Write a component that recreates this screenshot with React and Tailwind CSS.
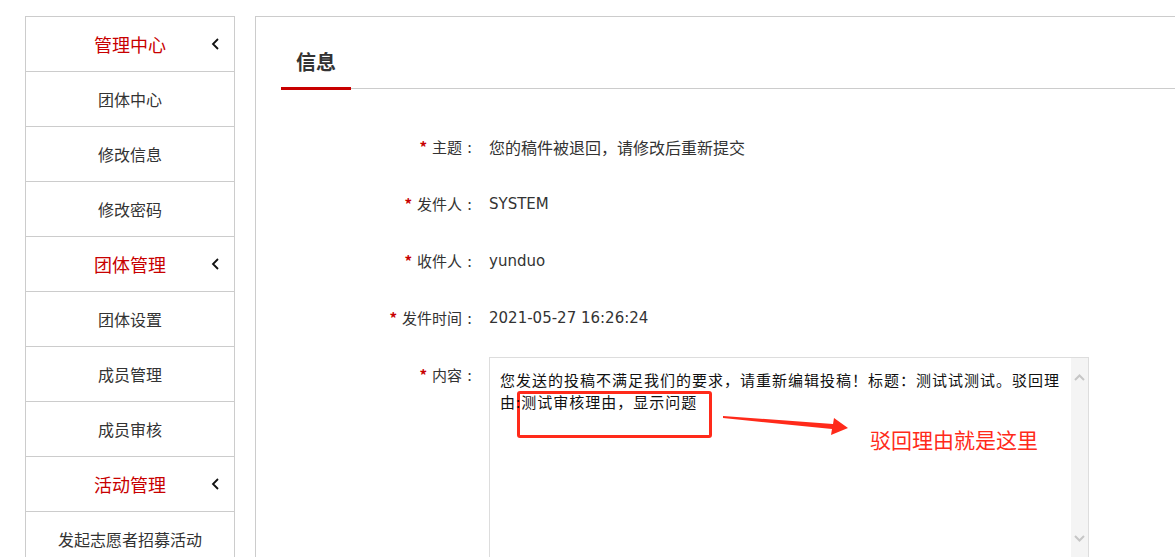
import React from "react";

const font = { fontFamily: '"Noto Sans CJK SC", "Noto Sans", sans-serif' };
const latin = { fontFamily: '"DejaVu Sans", "Noto Sans CJK SC", sans-serif' };

function Chevron() {
  return (
    <svg width="9" height="12" viewBox="0 0 9 12" className="block">
      <polyline points="7,1 2,6 7,11" fill="none" stroke="#111" strokeWidth="1.8" />
    </svg>
  );
}

function SideHeader({ label }) {
  return (
    <div className="h-[55px] border-b border-[#ccc] grid grid-cols-[1fr_auto_1fr] items-center">
      <div />
      <div className="text-[18px] text-[#c80000] leading-none">{label}</div>
      <div className="flex justify-end pr-[14px]">
        <Chevron />
      </div>
    </div>
  );
}

function SideItem({ label }) {
  return (
    <div className="h-[55px] border-b border-[#ccc] flex items-center justify-center text-[16px] text-[#333] leading-none">
      {label}
    </div>
  );
}

function Label({ children }) {
  return (
    <>
      <span className="text-[#c80000] font-bold mr-[5px]">*</span>
      {children}
      <span className="inline-block w-[15px] text-center">:</span>
    </>
  );
}

function Row({ label, value, latinValue }) {
  return (
    <div className="h-[57px] flex items-center">
      <div className="w-[221px] text-right text-[15px] text-[#333] leading-[22px]">
        <Label>{label}</Label>
      </div>
      {latinValue ? (
        <div className="ml-[12px] text-[15px] text-[#333] leading-[22px]" style={latin}>
          {value}
        </div>
      ) : (
        <div className="ml-[12px] text-[16px] text-[#333] leading-[22px]">{value}</div>
      )}
    </div>
  );
}

export default function App() {
  return (
    <div
      className="w-[1175px] h-[557px] overflow-hidden bg-white flex items-start pt-4 pl-[25px] gap-5"
      style={font}
    >
      <div className="w-[210px] shrink-0 border border-[#ccc]">
        <SideHeader label="管理中心" />
        <SideItem label="团体中心" />
        <SideItem label="修改信息" />
        <SideItem label="修改密码" />
        <SideHeader label="团体管理" />
        <SideItem label="团体设置" />
        <SideItem label="成员管理" />
        <SideItem label="成员审核" />
        <SideHeader label="活动管理" />
        <SideItem label="发起志愿者招募活动" />
      </div>

      <div className="w-[940px] shrink-0 h-[600px] border border-[#ccc]">
        <div className="pl-[25px]">
          <div className="h-[72px] border-b border-[#ccc] flex items-start">
            <div className="w-[70px] h-[73px] border-b-[3px] border-[#c80000] flex items-end justify-center pb-[11px]">
              <span className="text-[20px] font-bold text-[#333] leading-[28px]">信息</span>
            </div>
          </div>
        </div>

        <div className="pt-[29px]">
          <Row label="主题" value="您的稿件被退回，请修改后重新提交" />
          <Row label="发件人" value="SYSTEM" latinValue />
          <Row label="收件人" value="yunduo" latinValue />
          <Row label="发件时间" value="2021-05-27 16:26:24" latinValue />

          <div className="mt-[11px] flex items-start">
            <div className="w-[221px] pt-[7px] text-right text-[15px] text-[#333] leading-[22px]">
              <Label>内容</Label>
            </div>
            <div className="ml-[12px] w-[600px] h-[210px] border border-[#ddd] relative flex">
              <div className="absolute left-[27px] top-[33px] w-[195px] h-[47px] border-[3px] border-[#ff2a1a] rounded-[3px]" />
              <div className="relative flex-1 pl-[10px] pt-[11px] text-[15px] leading-[22px] tracking-[1px] text-[#111]">
                <div className="whitespace-nowrap">您发送的投稿不满足我们的要求，请重新编辑投稿！标题：测试试测试。驳回理</div>
                <div className="whitespace-nowrap">由:测试审核理由，显示问题</div>
              </div>
              <div className="w-[17px] bg-[#f4f4f4] flex flex-col justify-between items-center pt-[16px] pb-[24px]">
                <svg width="11" height="7" viewBox="0 0 11 7">
                  <polyline points="1,6 5.5,1.5 10,6" fill="none" stroke="#c6c6c6" strokeWidth="2" />
                </svg>
                <svg width="11" height="7" viewBox="0 0 11 7">
                  <polyline points="1,1 5.5,5.5 10,1" fill="none" stroke="#c6c6c6" strokeWidth="2" />
                </svg>
              </div>

              <svg
                className="absolute left-[230px] top-[45px]"
                width="135"
                height="40"
                viewBox="0 0 135 40"
              >
                <polygon
                  points="3,13 113,21 114,15 128,25 111,32 112,26 3,15"
                  fill="#ff2a1a"
                />
              </svg>
              <div className="absolute left-[380px] top-[67px] text-[21px] leading-[28px] text-[#ff2a1a] whitespace-nowrap">
                驳回理由就是这里
              </div>
            </div>
          </div>
        </div>
      </div>
    </div>
  );
}
